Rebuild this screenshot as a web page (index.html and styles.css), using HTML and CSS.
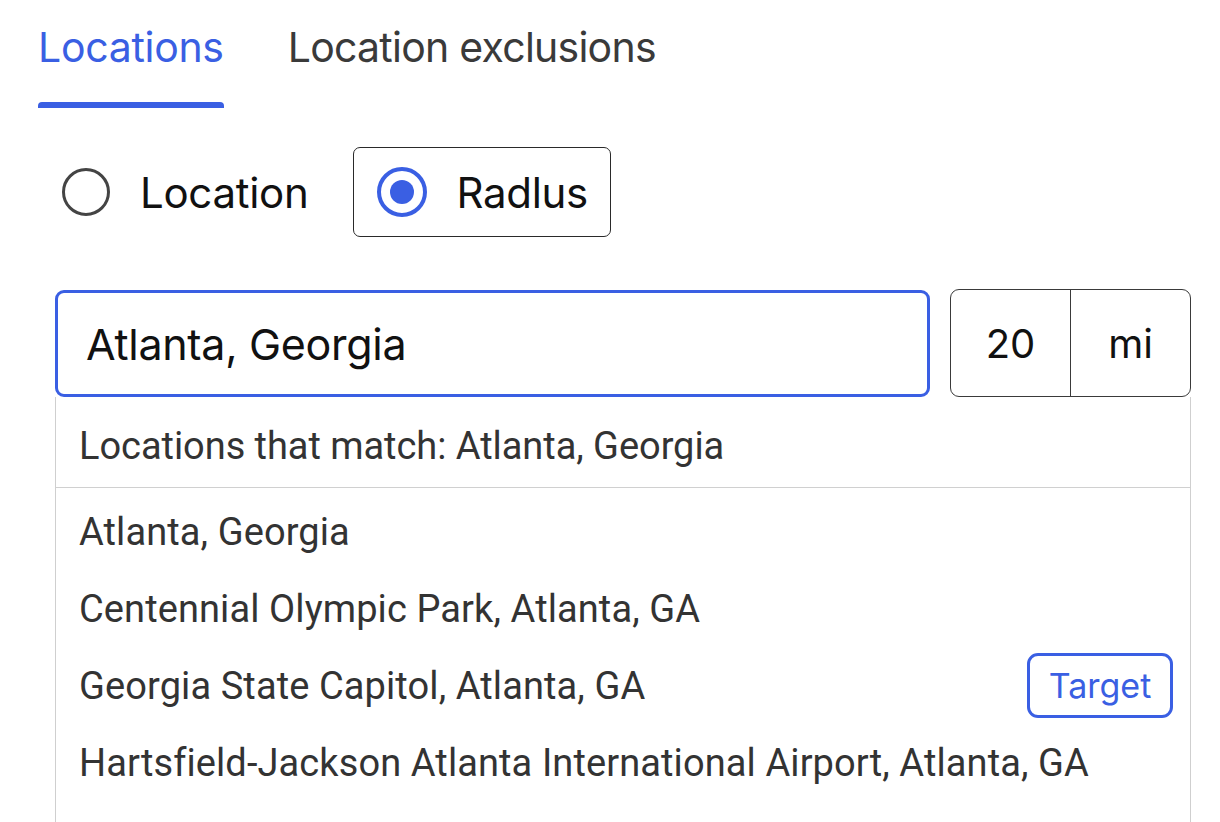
FILE: index.html
```html
<!DOCTYPE html>
<html lang="en">
<head>
<meta charset="utf-8">
<title>Locations</title>
<link rel="stylesheet" href="styles.css">
</head>
<body>
<div class="page">
  <nav class="tabs">
    <div class="tab tab-active">Locations</div>
    <div class="tab">Location exclusions</div>
  </nav>

  <div class="radio-row">
    <label class="radio-option">
      <span class="radio"></span>
      <span class="radio-label">Location</span>
    </label>
    <label class="radio-option radio-option-boxed">
      <span class="radio radio-checked"><span class="radio-dot"></span></span>
      <span class="radio-label">Radlus</span>
    </label>
  </div>

  <div class="search-row">
    <div class="search-input">Atlanta, Georgia</div>
    <div class="radius-box">
      <div class="radius-value">20</div>
      <div class="radius-unit">mi</div>
    </div>
  </div>

  <div class="dropdown">
    <div class="dropdown-header">Locations that match: Atlanta, Georgia</div>
    <ul class="results">
      <li class="result">Atlanta, Georgia</li>
      <li class="result">Centennial Olympic Park, Atlanta, GA</li>
      <li class="result">Georgia State Capitol, Atlanta, GA <span class="target-btn">Target</span></li>
      <li class="result">Hartsfield-Jackson Atlanta International Airport, Atlanta, GA</li>
    </ul>
  </div>
</div>
</body>
</html>
```

FILE: styles.css
```css
html, body {
  margin: 0;
  padding: 0;
  background: #ffffff;
}

.page {
  width: 1220px;
  height: 822px;
  overflow: hidden;
  font-family: Inter, "Open Sans", sans-serif;
}

/* Tabs */
.tabs {
  display: flex;
  gap: 64px;
  padding-left: 38px;
}

.tab {
  font-size: 41px;
  line-height: 48px;
  padding-top: 23px;
  color: #3a3a3a;
  letter-spacing: -0.3px;
}

.tab:not(.tab-active) {
  letter-spacing: -0.75px;
}

.tab-active {
  color: #3a5fe3;
}

.tab-active::after {
  content: "";
  display: block;
  height: 6px;
  margin-top: 31px;
  background: #3a5fe3;
  border-radius: 4px 4px 0 0;
}

/* Radio row */
.radio-row {
  display: flex;
  align-items: center;
  margin-top: 39px;
  padding-left: 62px;
  gap: 45px;
}

.radio-option {
  display: flex;
  align-items: center;
  gap: 30px;
  height: 90px;
  box-sizing: border-box;
}

.radio-option-boxed {
  border: 1.5px solid #2a2a2a;
  border-radius: 7px;
  padding: 0 22px 0 23px;
  gap: 29px;
}

.radio {
  width: 48px;
  height: 48px;
  box-sizing: border-box;
  border: 3px solid #444;
  border-radius: 50%;
  display: flex;
  align-items: center;
  justify-content: center;
}

.radio-checked {
  border: 4px solid #3a5fe3;
  width: 50px;
  height: 50px;
}

.radio-dot {
  width: 24px;
  height: 24px;
  border-radius: 50%;
  background: #3a5fe3;
}

.radio-label {
  font-size: 42px;
  color: #111;
  letter-spacing: -0.3px;
}

/* Search row */
.search-row {
  display: flex;
  gap: 20px;
  margin-top: 53px;
  margin-left: 55px;
  width: 1136px;
  height: 107px;
}

.search-input {
  flex: 1;
  box-sizing: border-box;
  border: 3px solid #3a5fe3;
  border-radius: 9px;
  display: flex;
  align-items: center;
  padding-left: 28px;
  font-size: 43px;
  color: #111;
  letter-spacing: -0.3px;
}

.radius-box {
  width: 241px;
  box-sizing: border-box;
  border: 1.5px solid #3a3a3a;
  border-radius: 9px;
  display: flex;
  margin-top: -1px;
}

.radius-value,
.radius-unit {
  flex: 1;
  display: flex;
  align-items: center;
  justify-content: center;
  font-size: 40px;
  color: #111;
}

.radius-value {
  border-right: 1.5px solid #3a3a3a;
}

/* Dropdown */
.dropdown {
  margin-left: 55px;
  width: 1136px;
  box-sizing: border-box;
  border-left: 1.5px solid #cfcfcf;
  border-right: 1.5px solid #cfcfcf;
  height: 430px;
  font-family: Roboto, "Liberation Sans", sans-serif;
  color: #333;
  letter-spacing: 0.1px;
}

.dropdown-header {
  height: 91px;
  box-sizing: border-box;
  border-bottom: 1.5px solid #d0d0d0;
  display: flex;
  align-items: center;
  padding: 8px 0 0 23px;
  font-size: 38px;
  letter-spacing: -0.05px;
}

.results {
  list-style: none;
  margin: 0;
  padding: 5px 0 0;
}

.result {
  height: 77px;
  display: flex;
  align-items: center;
  justify-content: space-between;
  padding: 0 17px 0 23px;
  font-size: 38px;
}

.target-btn {
  width: 146px;
  height: 65px;
  box-sizing: border-box;
  border: 3px solid #3a5fe3;
  border-radius: 11px;
  display: flex;
  align-items: center;
  justify-content: center;
  color: #3a5fe3;
  font-family: Inter, "Open Sans", sans-serif;
  font-size: 34px;
  letter-spacing: 0;
}
```
